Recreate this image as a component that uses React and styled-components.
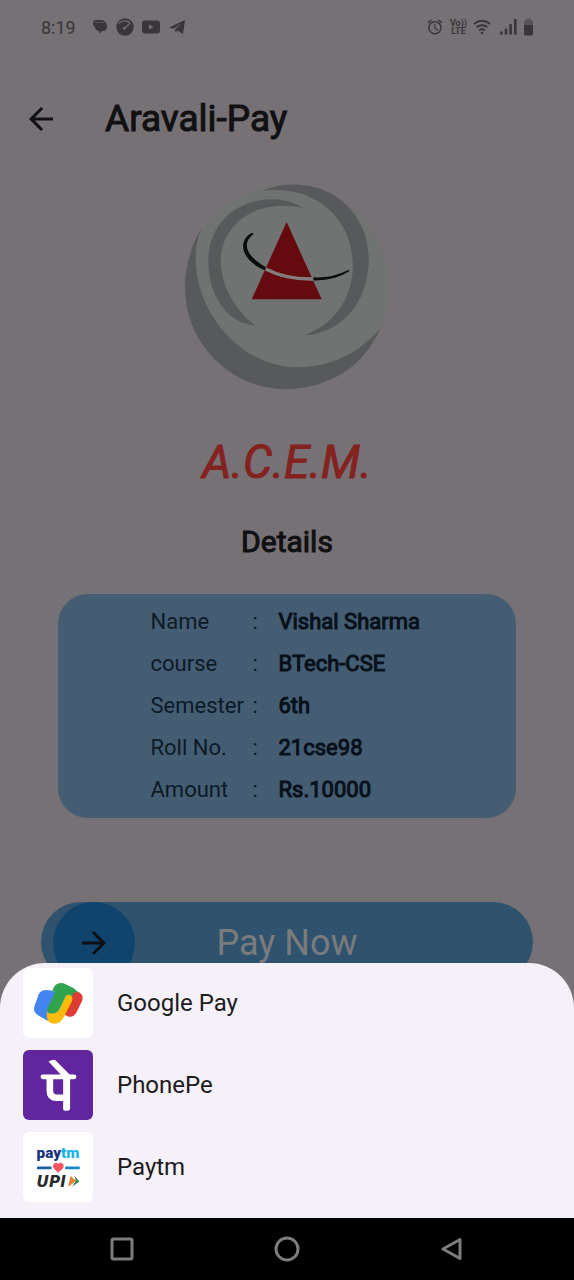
import React from 'react';
import styled, { createGlobalStyle } from 'styled-components';
import { MdArrowBack, MdArrowForward, MdAlarm } from 'react-icons/md';

const GlobalStyle = createGlobalStyle`
  * { box-sizing: border-box; }
  body { margin: 0; background: #767175; font-family: Roboto, "Liberation Sans", sans-serif; }
  button { font-family: inherit; border: 0; padding: 0; background: none; color: inherit; cursor: pointer; }
  svg { display: block; flex: none; }
`;

const Screen = styled.div`
  min-height: 100vh;
  overflow: hidden;
  color: #111012;
`;

const StatusBar = styled.div`
  display: flex;
  align-items: center;
  justify-content: space-between;
  height: 54px;
  padding: 0 41px;
  color: #393639;
  font-size: 18px;
`;

const StatusGroup = styled.div`
  display: flex;
  align-items: center;
  gap: ${(p) => p.$gap}px;
`;

const Clock = styled.span`
  margin-right: 8px;
`;

const VoLte = styled.span`
  display: flex;
  flex-direction: column;
  align-items: center;
  font-size: 9px;
  font-weight: 700;
  line-height: 8px;
`;

const AppBar = styled.header`
  display: flex;
  align-items: center;
  gap: 46px;
  height: 130px;
  padding: 0 23px;
`;

const BackButton = styled.button`
  width: 36px;
  height: 36px;
`;

const Title = styled.h1`
  margin: 0;
  font-size: 37px;
  font-weight: 400;
  line-height: 44px;
  -webkit-text-stroke: 1px;
`;

const Content = styled.main`
  display: flex;
  flex-direction: column;
  align-items: center;
`;

const CollegeName = styled.p`
  margin: 44px 0 0;
  color: #84221f;
  font-size: 46px;
  font-style: italic;
  font-weight: 400;
  line-height: 56px;
  -webkit-text-stroke: 1px;
`;

const SectionTitle = styled.h2`
  margin: 34px 0;
  font-size: 30px;
  font-weight: 400;
  line-height: 36px;
  -webkit-text-stroke: 1px;
`;

const Card = styled.section`
  display: flex;
  justify-content: center;
  width: calc(100% - 116px);
  padding: 7px 0;
  border-radius: 30px;
  background: #445d72;
`;

const DetailsTable = styled.table`
  border-collapse: collapse;
  font-size: 22px;
  line-height: 42px;
`;

const Label = styled.th`
  min-width: 102px;
  padding: 0;
  color: #0d1a28;
  font-weight: 400;
  text-align: left;
`;

const Colon = styled.td`
  min-width: 26px;
  padding: 0;
  color: #0d1a28;
`;

const Value = styled.td`
  min-width: 145px;
  padding: 0;
  color: #07101a;
  -webkit-text-stroke: 1px;
`;

const PayButton = styled.button`
  display: grid;
  grid-template-columns: 82px 1fr 82px;
  align-items: center;
  width: calc(100% - 82px);
  height: 80px;
  margin-top: 84px;
  padding: 0 12px;
  border-radius: 40px;
  background: #2f536f;
  color: #7b7b7c;
  font-size: 36px;
`;

const PayThumb = styled.span`
  display: grid;
  place-items: center;
  width: 82px;
  height: 82px;
  border-radius: 50%;
  background: #11446d;
  color: #0c0f14;
`;

const BottomLayer = styled.div`
  position: fixed;
  inset: auto 0 0 0;
`;

const Sheet = styled.section`
  display: flex;
  flex-direction: column;
  gap: 12px;
  padding: 5px 23px 16px;
  border-radius: 45px 45px 0 0;
  background: #f6f1f9;
`;

const AppOption = styled.button`
  display: flex;
  align-items: center;
  gap: 24px;
  color: #1d1b20;
  font-size: 24px;
  text-align: left;
`;

const AppTile = styled.svg`
  width: 70px;
  height: 70px;
  border-radius: 6px;
  background: ${(p) => p.$bg};
`;

const NavBar = styled.nav`
  display: flex;
  align-items: center;
  justify-content: space-between;
  height: 62px;
  padding: 0 108px;
  background: #000;
`;

const NavButton = styled.button`
  width: 28px;
  height: 28px;
`;

const details = [
  ['Name', 'Vishal Sharma'],
  ['course', 'BTech-CSE'],
  ['Semester', '6th'],
  ['Roll No.', '21cse98'],
  ['Amount', 'Rs.10000'],
];

function NotificationIcons() {
  return (
    <>
      <svg width="16" height="16" viewBox="0 0 16 16" fill="currentColor">
        <path d="M1 4Q1 1 4 1H11L13 3Q15 4 15 7Q15 12 11 12H10L8 15L7 12Q3 11 3 8L1 6Z" />
        <path d="M3 3.4H12" stroke="#767175" strokeWidth="0.5" />
      </svg>
      <svg width="18" height="18" viewBox="0 0 18 18">
        <circle cx="9" cy="9" r="8.7" fill="currentColor" />
        <path d="M2.5 5.5Q8 0.5 14 4.5M8.5 10.5L14 5" fill="none" stroke="#767175" strokeWidth="1.1" />
        <circle cx="8.3" cy="10.3" r="1.4" fill="#767175" />
      </svg>
      <svg width="18" height="18" viewBox="0 0 18 18">
        <rect x="0" y="2.6" width="18" height="12.8" rx="3" fill="currentColor" />
        <path d="M7 6.4L11.6 9L7 11.6Z" fill="#767175" />
      </svg>
      <svg width="18" height="18" viewBox="0 0 18 18" fill="currentColor">
        <path d="M1 9.5L17 2L15 16L9.5 12.5L7.5 14.5L7 11.5L14 5L5.5 10.8Z" />
      </svg>
    </>
  );
}

function WifiIcon() {
  return (
    <svg width="18" height="16" viewBox="0 0 18 16" fill="none" stroke="currentColor" strokeWidth="1.9">
      <path d="M1 5Q9 -1.5 17 5M3.5 8.3Q9 4 14.5 8.3M6 11.3Q9 9 12 11.3" />
      <circle cx="9" cy="14" r="1.3" fill="currentColor" stroke="none" />
    </svg>
  );
}

function SignalIcon() {
  return (
    <svg width="21" height="16" viewBox="-3 0 21 16" fill="currentColor">
      <rect x="0" y="12.5" width="2.6" height="3" />
      <rect x="4.7" y="9.5" width="2.6" height="6" />
      <rect x="9.3" y="5" width="2.6" height="10.5" />
      <rect x="14" y="0" width="2.6" height="15.5" />
    </svg>
  );
}

function BatteryIcon() {
  return (
    <svg width="9" height="18" viewBox="0 0 9 18">
      <path d="M0 7V4Q0 2 2 2H2.5V0.5H6.5V2H7Q9 2 9 4V7Z" fill="#575356" />
      <path d="M0 7H9V16Q9 17.5 7.5 17.5H1.5Q0 17.5 0 16Z" fill="currentColor" />
    </svg>
  );
}

function CollegeLogo() {
  return (
    <svg width="206" height="206" viewBox="43 41 618 618" role="img" aria-label="College logo">
      <circle cx="352" cy="350" r="306" fill="#717373" />
      <g fill="#57595b">
        <path d="M97 170C30 285 28 420 98 522C176 636 305 677 425 647C520 626 592 566 632 474C560 556 480 592 370 591C202 581 73 417 78 253C79 222 86 194 97 170Z" />
        <path d="M275 62C350 31 432 38 492 74C566 119 600 199 597 277C592 402 512 489 405 495C489 461 541 396 549 302C557 148 438 39 275 62Z" />
        <path d="M400 113C352 79 280 79 221 105C151 137 114 202 116 278C119 384 177 460 257 466C196 420 151 343 153 265C158 158 265 82 400 113Z" />
      </g>
      <path d="M351 155L246 387H456Z" fill="#650b0f" />
      <path d="M288 296Q350 328 431 326" fill="none" stroke="#857d7d" strokeWidth="10" />
      <path d="M247 187L252 192C223 211 217 250 288 290L286 300C212 269 203 210 247 187Z" fill="#0b0c0e" />
      <path d="M431 321Q487 324 536 299L540 302Q493 332 431 330Z" fill="#0b0c0e" />
    </svg>
  );
}

function GooglePayTile() {
  return (
    <AppTile viewBox="24 24 211 211" $bg="#fff" aria-hidden="true">
      <path d="M170 88L188 95Q208 103 203 121L185 158Q176 174 160 170L148 164L171 122Z" fill="#dd3d35" />
      <path d="M84 92Q92 88 108 92L124 96L108 149V182L98 183L68 166Q53 156 59 138L71 104Q75 95 84 92Z" fill="#4285ee" />
      <path d="M154 107Q163 101 172 110Q175 118 170 127L146 174Q136 193 118 192Q106 191 98 183Q95 170 96 155L108 161Q125 162 134 148Z" fill="#fabc09" />
      <path d="M117 82Q126 67 146 70L176 84Q188 92 190 101Q180 90 174 105L172 110Q163 101 154 107L134 148Q125 163 108 161Q92 160 98 145L119 99Q121 94 112 92Z" fill="#2fa34e" />
    </AppTile>
  );
}

function PhonePeTile() {
  return (
    <AppTile viewBox="24 15 211 211" $bg="#60259f" aria-hidden="true">
      <g fill="none" stroke="#fff" strokeLinejoin="round">
        <path d="M84 96H178" strokeWidth="14" strokeLinecap="round" />
        <path d="M105 98V138Q105 159 125 159H154" strokeWidth="20" />
      </g>
      <path d="M145 96H166V190Q166 198 158 198H150Q145 198 145 193Z" fill="#fff" />
      <path d="M101 50Q112 43 121 45L166 90V98H146Z" fill="#fff" />
    </AppTile>
  );
}

function PaytmTile() {
  return (
    <AppTile viewBox="24 21 211 211" $bg="#fff" aria-hidden="true">
      <text x="65" y="98" fontFamily="Roboto, sans-serif" fontSize="46" fontWeight="900" fill="#17347c">
        pay<tspan fill="#18b5ec">tm</tspan>
      </text>
      <path d="M66 129H110" stroke="#17629b" strokeWidth="8" />
      <path d="M151 129H195" stroke="#1788c7" strokeWidth="8" />
      <path d="M130 144L117 131C109 121 122 106 130 118C138 106 153 120 144 131Z" fill="#f4535e" />
      <text x="65" y="186" fontFamily="DejaVu Sans, sans-serif" fontSize="46" fontStyle="italic" fontWeight="700" fill="#272829">
        UPI
      </text>
      <path d="M167 153L184 169L160 186Z" fill="#e58235" />
      <path d="M179 154L194 170L172 186L183 169Z" fill="#36855a" />
    </AppTile>
  );
}

const paymentApps = [
  { name: 'Google Pay', Tile: GooglePayTile },
  { name: 'PhonePe', Tile: PhonePeTile },
  { name: 'Paytm', Tile: PaytmTile },
];

const navShapes = [
  { name: 'Recent apps', shape: <rect x="4" y="4" width="20" height="20" rx="1.5" /> },
  { name: 'Home', shape: <circle cx="14" cy="14" r="11" /> },
  { name: 'Back', shape: <path d="M5 14L22 4.5V23.5Z" /> },
];

export default function App() {
  return (
    <Screen>
      <GlobalStyle />
      <StatusBar>
        <StatusGroup $gap={8}>
          <Clock>8:19</Clock>
          <NotificationIcons />
        </StatusGroup>
        <StatusGroup $gap={6}>
          <MdAlarm size={18} />
          <VoLte>
            <span>Vo))</span>
            <span>LTE</span>
          </VoLte>
          <WifiIcon />
          <SignalIcon />
          <BatteryIcon />
        </StatusGroup>
      </StatusBar>
      <AppBar>
        <BackButton aria-label="Back to previous page">
          <MdArrowBack size={36} />
        </BackButton>
        <Title>Aravali-Pay</Title>
      </AppBar>
      <Content>
        <CollegeLogo />
        <CollegeName>A.C.E.M.</CollegeName>
        <SectionTitle>Details</SectionTitle>
        <Card>
          <DetailsTable>
            <tbody>
              {details.map(([label, value]) => (
                <tr key={label}>
                  <Label scope="row">{label}</Label>
                  <Colon>:</Colon>
                  <Value>{value}</Value>
                </tr>
              ))}
            </tbody>
          </DetailsTable>
        </Card>
        <PayButton>
          <PayThumb>
            <MdArrowForward size={36} />
          </PayThumb>
          <span>Pay Now</span>
        </PayButton>
      </Content>
      <BottomLayer>
        <Sheet aria-label="Payment apps">
          {paymentApps.map(({ name, Tile }) => (
            <AppOption key={name}>
              <Tile />
              {name}
            </AppOption>
          ))}
        </Sheet>
        <NavBar>
          {navShapes.map(({ name, shape }) => (
            <NavButton key={name} aria-label={name}>
              <svg width="28" height="28" viewBox="0 0 28 28" fill="none" stroke="#7d7d7d" strokeWidth="3" strokeLinejoin="round">
                {shape}
              </svg>
            </NavButton>
          ))}
        </NavBar>
      </BottomLayer>
    </Screen>
  );
}
